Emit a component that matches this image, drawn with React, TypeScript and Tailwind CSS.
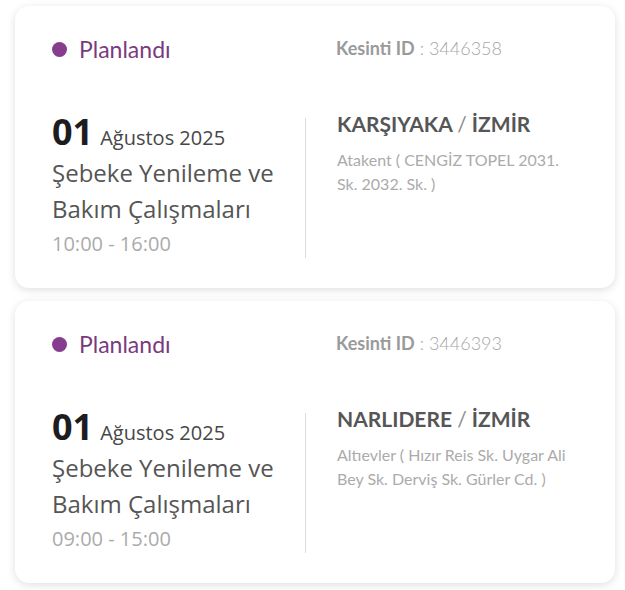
import React from "react";

interface Outage {
  id: string;
  day: string;
  monthYear: string;
  title: [string, string];
  time: string;
  district: string;
  city: string;
  address: [string, string];
}

const outages: Outage[] = [
  {
    id: "3446358",
    day: "01",
    monthYear: "Ağustos 2025",
    title: ["Şebeke Yenileme ve", "Bakım Çalışmaları"],
    time: "10:00 - 16:00",
    district: "KARŞIYAKA",
    city: "İZMİR",
    address: ["Atakent ( CENGİZ TOPEL 2031.", "Sk. 2032. Sk. )"],
  },
  {
    id: "3446393",
    day: "01",
    monthYear: "Ağustos 2025",
    title: ["Şebeke Yenileme ve", "Bakım Çalışmaları"],
    time: "09:00 - 15:00",
    district: "NARLIDERE",
    city: "İZMİR",
    address: ["Altıevler ( Hızır Reis Sk. Uygar Ali", "Bey Sk. Derviş Sk. Gürler Cd. )"],
  },
];

function OutageCard({ outage }: { outage: Outage }) {
  return (
    <div className="grid h-[282px] grid-cols-[253px_1fr] grid-rows-[auto_1fr] rounded-[14px] bg-white pl-[37px] pt-[29px] shadow-[0_2px_8px_rgba(0,0,0,0.13)]">
      {/* status */}
      <div className="flex h-[28px] items-center gap-[12px] font-['Lato',sans-serif]">
        <span className="h-[15px] w-[15px] rounded-full bg-[#863d8d]" />
        <span className="text-[23px] text-[#7a3b7e]">Planlandı</span>
      </div>
      <div className="flex h-[26px] items-center pl-[31px] font-['Lato',sans-serif] text-[18px] text-[#a6a6a6]">
        <span className="font-bold text-[#9a9a9a]">Kesinti ID</span>
        <span className="font-light">&nbsp;: {outage.id}</span>
      </div>

      {/* date + title */}
      <div className="mt-[52px] flex flex-col font-['Open_Sans',sans-serif]">
        <div className="flex items-baseline gap-[7px] leading-[33px]">
          <span className="text-[36px] font-bold text-[#1d1d1f]">{outage.day}</span>
          <span className="text-[20px] text-[#474747]">{outage.monthYear}</span>
        </div>
        <p className="text-[24px] leading-[37px] text-[#555]">{outage.title[0]}</p>
        <p className="text-[24px] leading-[36px] text-[#555]">{outage.title[1]}</p>
        <p className="text-[20px] leading-[34px] text-[#ababab]">{outage.time}</p>
      </div>

      {/* location */}
      <div className="mt-[55px] h-[140px] self-start border-l border-[#dcdcdc] pl-[31px] font-['Lato',sans-serif]">
        <p className="-mt-[6px] text-[21px] font-bold leading-[24px] text-[#565656]">
          {outage.district} <span className="font-normal text-[#8a8a8a]">/</span> {outage.city}
        </p>
        <p className="mt-[12px] text-[16px] leading-[24px] text-[#ababab]">
          {outage.address[0]}
          <br />
          {outage.address[1]}
        </p>
      </div>
    </div>
  );
}

export default function App() {
  return (
    <div className="min-h-[590px] w-[625px] bg-white px-[15px] pt-[6px]">
      <div className="flex w-[600px] flex-col gap-[13px]">
        {outages.map((o) => (
          <OutageCard key={o.id} outage={o} />
        ))}
      </div>
    </div>
  );
}
